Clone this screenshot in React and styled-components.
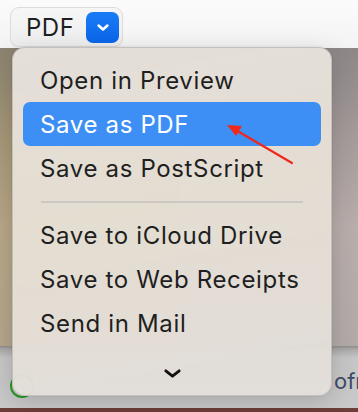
import React from "react";
import styled, { createGlobalStyle } from "styled-components";

const Global = createGlobalStyle`
  html, body { margin: 0; padding: 0; background: #f7f7f7; }
  body { font-family: Inter, "Noto Sans", "Liberation Sans", sans-serif; }
  #root { width: 358px; height: 412px; }
`;

const Screen = styled.div`
  position: relative;
  width: 358px;
  height: 412px;
  overflow: hidden;
  display: flex;
  flex-direction: column;
`;

const TopBar = styled.div`
  height: 48px;
  flex: none;
  background: linear-gradient(180deg, #fbfbfb 0%, #f3f3f3 100%);
  display: flex;
  align-items: flex-start;
  padding: 7px 0 0 10px;
  box-sizing: border-box;
`;

const FormatButton = styled.div`
  width: 113px;
  height: 40px;
  box-sizing: border-box;
  border-radius: 9px;
  background: linear-gradient(180deg, #f6f6f6 0%, #eeeeee 100%);
  border: 1px solid #dcdcdc;
  box-shadow: 0 1px 1px rgba(0, 0, 0, 0.06);
  display: flex;
  align-items: center;
  justify-content: space-between;
  padding: 0 3px 0 15px;
`;

const FormatLabel = styled.span`
  font-size: 24px;
  color: #1f1f1f;
  letter-spacing: 0.5px;
`;

const BlueSquare = styled.div`
  width: 33px;
  height: 31px;
  border-radius: 7px;
  background: linear-gradient(180deg, #1a7cf5 0%, #0a66ea 100%);
  display: flex;
  align-items: center;
  justify-content: center;
`;

const Desktop = styled.div`
  flex: 1;
  display: flex;
`;

const Wallpaper = styled.div`
  flex: 1;
  background: ${(p) => p.$bg};
`;

const Toolbar = styled.div`
  height: 62px;
  flex: none;
  background: linear-gradient(180deg, #8f8c89 0px, #a9a8a7 3px, #c6c6c6 12px, #c9c9c9 100%);
  display: flex;
  align-items: center;
  justify-content: space-between;
  padding: 0 0 0 10px;
  box-sizing: border-box;
  overflow: hidden;
`;

const GreenRing = styled.div`
  width: 24px;
  height: 24px;
  border-radius: 50%;
  border: 2px solid #2a9a26;
  box-sizing: border-box;
  margin-top: 18px;
`;

const ToolbarText = styled.span`
  font-size: 22px;
  color: #3e4a68;
  margin-top: 8px;
  white-space: nowrap;
  width: 24px;
`;

const BottomStrip = styled.div`
  height: 4px;
  flex: none;
  background: #6e3e38;
`;

const Menu = styled.div`
  position: absolute;
  left: 12px;
  top: 47px;
  width: 320px;
  height: 349px;
  box-sizing: border-box;
  border-radius: 13px;
  background: linear-gradient(170deg, rgba(231, 226, 221, 0.97) 0%, rgba(230, 223, 212, 0.96) 45%, rgba(226, 222, 218, 0.97) 100%);
  border: 1px solid rgba(160, 155, 150, 0.45);
  box-shadow: 0 6px 24px rgba(0, 0, 0, 0.16), 0 0 2px rgba(0, 0, 0, 0.12);
  padding: 10px 10px 0;
  display: flex;
  flex-direction: column;
`;

const Item = styled.div`
  height: 44px;
  flex: none;
  display: flex;
  align-items: center;
  padding-left: 17px;
  border-radius: 7px;
  font-size: 24px;
  letter-spacing: 0.65px;
  color: ${(p) => (p.$active ? "#ffffff" : "#1f1f1f")};
  background: ${(p) => (p.$active ? "#3d8ff5" : "transparent")};
`;

const Separator = styled.div`
  height: 23px;
  flex: none;
  display: flex;
  align-items: center;
  padding: 0 18px;
  &::after {
    content: "";
    flex: 1;
    height: 2px;
    background: #ccc7c2;
  }
`;

const MoreRow = styled.div`
  flex: 1;
  display: flex;
  align-items: center;
  justify-content: center;
  padding-top: 6px;
`;

const Arrow = styled.svg`
  position: absolute;
  left: 220px;
  top: 118px;
  width: 80px;
  height: 52px;
  overflow: visible;
`;

const Chevron = ({ w, h, color, sw }) => (
  <svg width={w} height={h} viewBox={`0 0 ${w} ${h}`}>
    <path
      d={`M ${sw} ${sw} L ${w / 2} ${h - sw} L ${w - sw} ${sw}`}
      fill="none"
      stroke={color}
      strokeWidth={sw}
      strokeLinecap="round"
      strokeLinejoin="round"
    />
  </svg>
);

export default function App() {
  const top = ["Open in Preview", "Save as PDF", "Save as PostScript"];
  const bottom = ["Save to iCloud Drive", "Save to Web Receipts", "Send in Mail"];
  return (
    <Screen>
      <Global />
      <TopBar>
        <FormatButton>
          <FormatLabel>PDF</FormatLabel>
          <BlueSquare>
            <Chevron w={14} h={9} color="#ffffff" sw={2.6} />
          </BlueSquare>
        </FormatButton>
      </TopBar>
      <Desktop>
        <Wallpaper $bg="linear-gradient(180deg, #8b8370 0%, #a69778 30%, #b7a787 60%, #b4a68b 100%)" />
        <Wallpaper $bg="linear-gradient(180deg, #8d8787 0%, #a49b9a 30%, #b8adab 60%, #b2aaa8 100%)" />
      </Desktop>
      <Toolbar>
        <GreenRing />
        <ToolbarText>ofr</ToolbarText>
      </Toolbar>
      <BottomStrip />
      <Menu>
        {top.map((t, i) => (
          <Item key={t} $active={i === 1}>
            {t}
          </Item>
        ))}
        <Separator />
        {bottom.map((t) => (
          <Item key={t}>{t}</Item>
        ))}
        <MoreRow>
          <Chevron w={19} h={11} color="#111111" sw={2.8} />
        </MoreRow>
      </Menu>
      <Arrow viewBox="0 0 80 52">
        <line x1="72" y1="45" x2="14" y2="11" stroke="#f0281c" strokeWidth="2.2" strokeLinecap="round" />
        <polygon points="7,7 22,8 16,18" fill="#f0281c" />
      </Arrow>
    </Screen>
  );
}
